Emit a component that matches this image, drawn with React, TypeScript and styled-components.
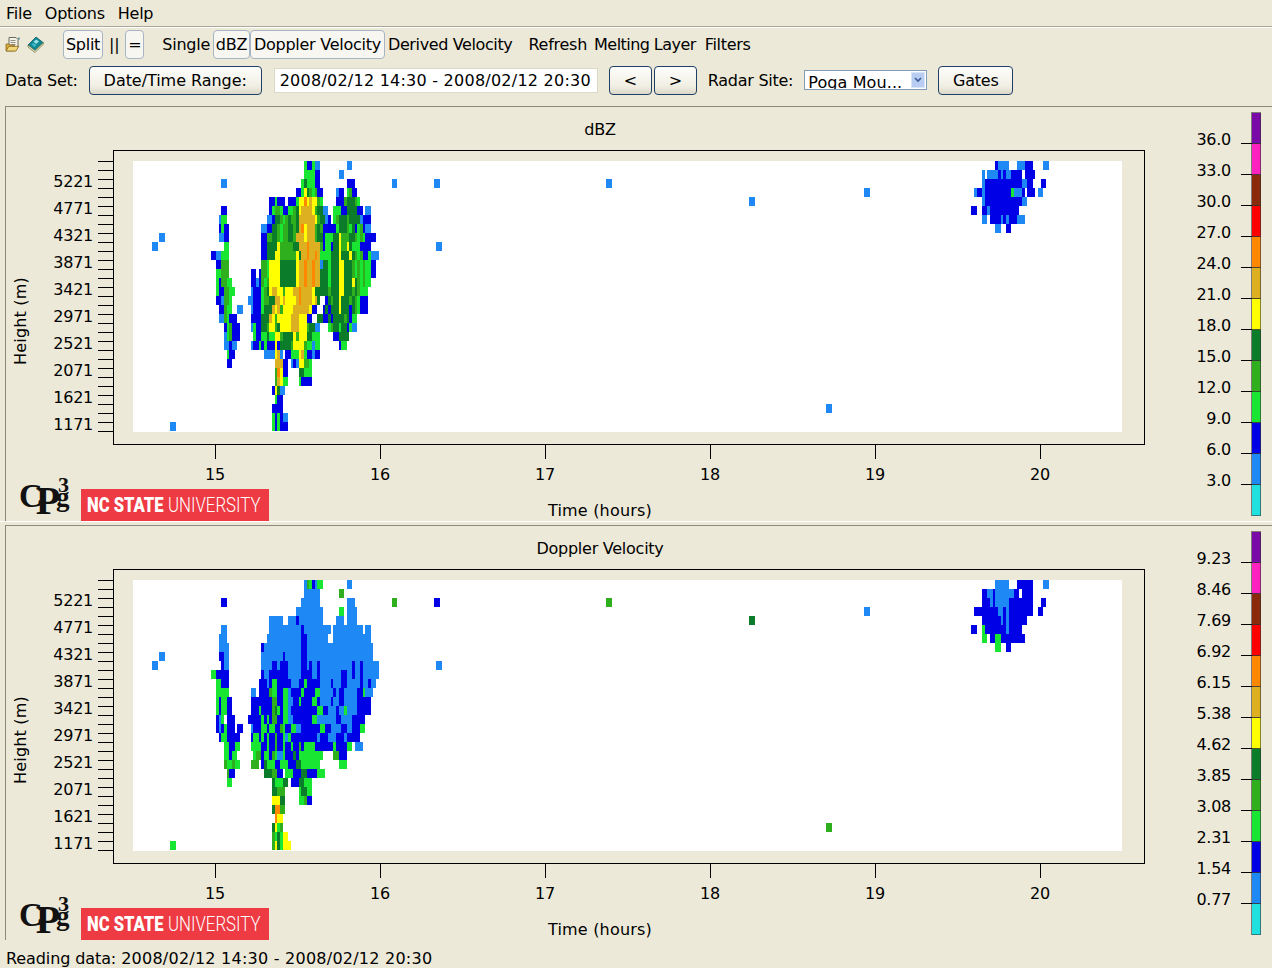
import React from "react";
import styled, { createGlobalStyle } from "styled-components";

const FONT = `"DejaVu Sans", "Liberation Sans", sans-serif`;

const Global = createGlobalStyle`
  html, body { margin: 0; padding: 0; background: #ece9d8; }
  body { font-family: ${FONT}; color: #000; }
`;

const Root = styled.div`
  width: 1272px; height: 968px; overflow: hidden; display: flex; flex-direction: column;
  background: #ece9d8; font-size: 16px; letter-spacing: -0.25px;
`;
const MenuBar = styled.div`
  height: 27px; box-sizing: border-box; display: flex; align-items: center; gap: 13px;
  padding: 1px 6px 0; border-bottom: 1px solid #aca899; box-shadow: 0 1px 0 #fff;
`;
const Toolbar = styled.div`
  height: 33px; margin-top: 1px; display: flex; align-items: center; padding-left: 5px;
`;
const IconSlot = styled.svg<{ $ml?: number }>`
  width: 17px; height: 17px; margin-left: ${p => p.$ml ?? 0}px; flex: none;
`;
const ToolButton = styled.div<{ $w: number; $ml?: number }>`
  box-sizing: border-box; width: ${p => p.$w}px; height: 29px; margin-left: ${p => p.$ml ?? 0}px;
  display: flex; align-items: center; justify-content: center; flex: none;
  background: #f7f6f0; border: 1px solid #a8b3c4; border-radius: 4px;
`;
const ToolLabel = styled.span<{ $ml?: number; $ls?: number }>`
  margin-left: ${p => p.$ml ?? 0}px; white-space: nowrap; flex: none;
  letter-spacing: ${p => p.$ls ?? -0.25}px;
`;
const DataRow = styled.div`
  height: 32px; margin-top: 4px; display: flex; align-items: center; padding-left: 5px;
`;
const PushButton = styled.div<{ $w: number; $ml?: number; $ls?: number }>`
  box-sizing: border-box; width: ${p => p.$w}px; height: 29px; margin-left: ${p => p.$ml ?? 0}px;
  display: flex; align-items: center; justify-content: center; flex: none;
  letter-spacing: ${p => p.$ls ?? -0.25}px;
  background: linear-gradient(#fdfdfb, #f1efe4 70%, #dcd8c8);
  border: 1px solid #1f3f66; border-radius: 4px;
`;
const RangeField = styled.div`
  box-sizing: border-box; width: 324px; height: 25px; margin-left: 12px; padding-left: 5px;
  display: flex; align-items: center; flex: none; background: #fff;
  border: 1px solid #dcd9c9; white-space: nowrap; letter-spacing: 0.24px;
`;
const Combo = styled.div`
  box-sizing: border-box; width: 123px; height: 20px; margin-left: 11px; flex: none;
  display: flex; align-items: center; background: #fff; border: 1px solid #7f9db9; overflow: hidden;
`;
const ComboText = styled.span`
  flex: 1; padding-left: 3px; white-space: nowrap; line-height: 22px; height: 18px; margin-top: 1px;
  overflow: hidden; letter-spacing: 0.1px;
`;
const ComboArrow = styled.div`
  width: 14px; height: 16px; margin-right: 1px; background: #b9cdf3; border: 1px solid #dbe5f8; box-sizing: border-box;
  display: flex; align-items: center; justify-content: center; flex: none;
`;
const Charts = styled.div`
  margin-top: 10px; display: flex; flex-direction: column;
`;
const Panel = styled.section`
  position: relative; box-sizing: border-box; width: 1267px; height: 415px; margin-left: 5px;
  border-top: 1px solid #8c8a7c; border-left: 1px solid #8c8a7c;
`;
const Splitter = styled.div`
  height: 4px; box-sizing: border-box; border-top: 1px solid #fff;
`;
const ChartSvg = styled.svg`
  position: absolute; left: -1px; top: -1px; width: 1267px; height: 415px; display: block;
`;
const Title = styled.text`
  font-family: ${FONT}; font-size: 16px; letter-spacing: -0.25px; text-anchor: middle; dominant-baseline: central; fill: #000;
`;
const WideTitle = styled(Title)`
  letter-spacing: 0.2px;
`;
const EndLabel = styled(Title)`
  text-anchor: end;
`;
const Logo = styled.div`
  position: absolute; left: 13px; top: 369px; width: 60px; height: 42px;
  font-family: "Liberation Serif", serif; font-weight: 700; color: #111;
`;
const LogoLetters = styled.span`
  position: absolute; left: 0; top: 0; font-size: 40px; line-height: 40px; letter-spacing: -6px; white-space: nowrap;
`;
const LogoC = styled.span`
  font-size: 33px; vertical-align: 7px; letter-spacing: -7px;
`;
const LogoG = styled.span`
  position: absolute; left: 37px; top: 16px; font-size: 27px; line-height: 10px;
`;
const LogoThree = styled.span`
  position: absolute; left: 39px; top: 2px; font-size: 22px; line-height: 14px;
`;
const Brand = styled.div`
  position: absolute; left: 75px; top: 382px; width: 188px; height: 32px; background: #ee3a43;
  color: #fff; overflow: hidden; font-family: "Roboto", "Liberation Sans", sans-serif; font-size: 21px; line-height: 32px; letter-spacing: 0;
`;
const BrandPart = styled.span<{ $left: number; $bold?: boolean; $sx: number }>`
  position: absolute; left: ${p => p.$left}px; top: 0; white-space: nowrap;
  font-weight: ${p => (p.$bold ? 900 : 300)}; transform: scaleX(${p => p.$sx}); transform-origin: left center;
`;
const StatusBar = styled.div`
  height: 20px; margin-top: 8px; padding-left: 6px; display: flex; align-items: center; white-space: pre;
  letter-spacing: -0.1px;
`;
const StatusDate = styled.span`
  letter-spacing: 0.24px;
`;

const C: Record<string, string> = {
  c: "#20e0e0", b: "#1e88f5", B: "#0000e6", g: "#19e632", G: "#2fae1e", D: "#0b7d2a",
  y: "#ffff00", O: "#dcb020", o: "#ff8800", r: "#ff0000", n: "#8b2a0a", m: "#ff20c0", p: "#7a0aa8",
};
const W = 8 / 3;
type Rect = { x: number; y: number; w: number; c: string };

function parseRows(rows: string[], baseX: number, topY: number): Rect[] {
  const out: Rect[] = [];
  rows.forEach((row, r) => {
    row.split(" ").filter(Boolean).forEach(seg => {
      const [start, body] = seg.split(":");
      let col = Number(start);
      for (const m of body.matchAll(/([a-zA-Z.])(\d*)/g)) {
        const n = m[2] ? Number(m[2]) : 1;
        if (m[1] !== ".") out.push({ x: baseX + col * W, y: topY + r * 9, w: n * W, c: C[m[1]] });
        col += n;
      }
    });
  });
  return out;
}

const DBZ_MAIN = [
  "39:gBBgbb 55:bb",
  "39:ggggBB 52:bb",
  "8:bb 38:gDgggBB 55:BBB 72:bb",
  "36:BBgyDGgGBB 51:bBB 55:gGBB",
  "26:BBgBBB 33:BBBgyyoyOyyGg 51:BBBGDDDGg",
  "8:BB 26:BgGGgBBggGDyOOOOyGDDbb 50:gggBBDDDDBB 62:bb",
  "7:bgg 25:bbBDDGgGDGGDOOOOOOyGDDbB 50:gGDDDGDDDDbBBB",
  "7:BgBB 23:bbBBDDGgGGDDGDOoyOOOGDGBBBBB 51:gDDDGgDBgGBbb",
  "7:bbBB 23:BBGGDDGgGGDDGOOOyOOOGDD 46:BgggDDyGGGDDGgGgBBBB",
  "9:gg 23:BBDDDDyGGGGGDDOOOoOOOOG 46:BggBDDyGGyDgggBBBB",
  "4:BBbbggg 23:BBDDDyyGGGGGGyDOOoOOoO 45:ggggDDDyDDDyDGgGBBgbbb",
  "6:BBGGG 23:GGgyyyyDDDDDDyOOoOOoOOb 46:DDgDDDyyDDDGgGgGggBB",
  "6:ggGGG 19:BB.BGGgyyyyDDDDDDyOOoOOoOOD 46:DDgDDDyyDDDGgGgGggBB",
  "6:gBGGgg 19:BBbBGgGyyyyDDDDDDyOOoOOoOOD 46:DDgDDDyyDDDyDGgGgg",
  "6:gBBGGgg 19:bBBBgGDyOOyyGyyyOOoOOOOyDDD 46:DDGDDDyyDDDGDGggg",
  "6:BBbGGg 18:bbBBBgGGDDOOyOyyyyOoOOOOyOD 47:BDGDDyDDDGDGgBBB",
  "7:BBGgg 14:bb 19:bBBBgDDDOyOGyyyyOOOOOOyBB 46:BDBDDDyDDDBDGgBBB",
  "7:bbGgBBB 19:BBBBDDDOyGyyyyyOOOyyyBB 44:DDBBDBDDDDGDBgg",
  "9:BgGBBB 19:bgBBDDGyyGDyyyyOOOyyyGDDbb 48:gGDDgDDBgbb",
  "9:bgGBBB 20:gBBggDggyyGDDDDyGyyyDDggg 50:BBDDDD",
  "9:bbBbb 19:bBBgBgBBByBDDDDGyyyyGggbgg 52:Bgg",
  "10:gBB 24:bbbbyOb.BBgggyOgBBbBB",
  "10:BB 28:OOOBB.bBbyyGGg",
  "28:GoyBB 37:DDggg",
  "28:GOygg 37:gBBBB",
  "27:ByDbb",
  "28:gBB",
  "27:BBBB",
  "27:gBgBbb",
  "27:gBgBBB",
];
const VEL_MAIN = [
  "39:bGgBbgg 55:bb",
  "39:b6 52:GG",
  "8:BB 38:b7 55:b3 72:GG",
  "36:b10 52:gg 55:b4",
  "26:b5 33:b3Bb9 51:b3 55:b4",
  "8:bb 26:b12Bb10 50:b11 62:bb",
  "7:b3 25:b13B2b8 50:b14",
  "7:b4 23:Bb14B2b25",
  "7:B2b2 23:b8Bb6B2b25",
  "8:Bb2 23:b4B2bB3b5B2bBb2Bb12Bb2Bb6",
  "4:g2B5 23:Bb2B7b5B4b2Bb8B2b2Bb2Bb6",
  "6:g2B3 22:B3bBg2B5b3B2gB5b4Bb3B2b5Bb2Bb2",
  "6:g5 19:b2.B4Gg2B2g2bB4gB4g2b5BbB2b5B2gb3",
  "6:gBg2B2 19:B8G2B2g2b2B2gB4g2Bb4Bb2B2b5B5",
  "6:gBg2B2 19:B3gB4GDgBg2bB10g2B2b3Bb2gb4B5",
  "6:Bbg.B3 18:B5gBgBG2B2g2b2B7g2b7B2b4B5",
  "6:BbBgB3.B2 19:bB3g2Bg2B2GgB2g2b2B7g2B2b4B2b2B3g2",
  "7:Bg2B5 19:Bg2BgBgB2GB2gbgB10bB3b3B3bB5",
  "9:g2B2g2 19:g4B2gB2GB2gB2gB2GBg4B7gB4g2.b3",
  "9:g2Bg2 20:gG2Bg2BGgb2gB3DBg9 50:G2B3",
  "9:Gg2Gg2 19:G3.BDg3B2g3B3D2g7 52:g3",
  "10:GB2 24:D3G2B2.g3B3D2B4g3",
  "10:g2 27:Dg3D2.B3D2g3",
  "27:D2G3 37:gD2g2",
  "27:y3D2 37:g2GB2",
  "27:Do2G2",
  "28:oy2",
  "27:DygG",
  "27:GgDgy2",
  "27:GyDgy3",
];
const DBZ_CLUSTER = [
  "17:Bb4 25:b3B3 35:b2",
  "12:b.b4BbBb2B4.B4",
  "12:bB14b2B2 34:B2",
  "9:bB2bB10gb3B.B3.b2",
  "12:bB14b2",
  "8:B2 12:B2bB11",
  "12:b2.B4bBbB3b3",
  "17:b2 21:B2",
];
const VEL_CLUSTER = [
  "17:b5 25:B6 35:b2",
  "12:B2b2Bb7B2.B4",
  "12:B3bBb5B9 34:B2",
  "9:B9b2BbB9 33:B2",
  "12:B7bBbB7",
  "8:B2 12:gB8bB5",
  "12:g2.B2g2B9",
  "17:g2 21:B2",
];
type Spot = [number, number, string];
const DBZ_SPOTS: Spot[] = [[155, 9, "b"], [162, 8, "b"], [173, 29, "b"], [437, 2, "b"], [439, 9, "b"], [609, 2, "b"], [752, 4, "b"], [867, 3, "b"], [829, 27, "b"]];
const VEL_SPOTS: Spot[] = [[155, 9, "b"], [162, 8, "b"], [173, 29, "g"], [437, 2, "B"], [439, 9, "b"], [609, 2, "G"], [752, 4, "D"], [867, 3, "b"], [829, 27, "G"]];

const HEIGHTS = ["5221", "4771", "4321", "3871", "3421", "2971", "2521", "2071", "1621", "1171"];
const HOURS = [15, 16, 17, 18, 19, 20];
const LEGEND = ["p", "m", "n", "r", "o", "O", "y", "D", "G", "g", "B", "b", "c"];

interface ChartProps {
  title: string; main: string[]; cluster: string[]; spots: Spot[]; legend: string[];
}

function Chart({ title, main, cluster, spots, legend }: ChartProps) {
  const top = 161;
  const rects = [...parseRows(main, 200, top), ...parseRows(cluster, 950, top)];
  const ticks = Array.from({ length: 31 }, (_, i) => 161 + i * 9);
  return (
    <ChartSvg viewBox={`5 106 1267 415`}>
      <Title x={600} y={129}>{title}</Title>
      <rect x={113.5} y={150.5} width={1031} height={294} fill="none" stroke="#000" />
      <rect x={133} y={161} width={989} height={271} fill="#fff" />
      <g shapeRendering="crispEdges">
        {rects.map((r, i) => <rect key={i} x={r.x} y={r.y} width={r.w} height={9} fill={r.c} />)}
        {spots.map(([x, row, c], i) => <rect key={i} x={x - 3} y={top + row * 9} width={6} height={9} fill={C[c]} />)}
        {ticks.map(y => <line key={y} x1={98} x2={113} y1={y + 0.5} y2={y + 0.5} stroke="#000" />)}
        {HOURS.map((h, i) => <line key={h} x1={215.5 + i * 165} x2={215.5 + i * 165} y1={444} y2={459} stroke="#000" />)}
      </g>
      {HEIGHTS.map((h, i) => <EndLabel key={h} x={93} y={181 + i * 27}>{h}</EndLabel>)}
      {HOURS.map((h, i) => <Title key={h} x={215 + i * 165} y={474}>{h}</Title>)}
      <WideTitle x={600} y={510}>Time (hours)</WideTitle>
      <WideTitle transform="translate(20 321) rotate(-90)" x={0} y={0}>Height (m)</WideTitle>
      <g shapeRendering="crispEdges">
        {LEGEND.map((c, i) => <rect key={c} x={1251.5} y={112.5 + i * 31} width={9} height={31} fill={C[c]} stroke="#333" strokeWidth={0.6} />)}
        {legend.map((_, i) => <line key={i} x1={1241} x2={1252} y1={143.5 + i * 31} y2={143.5 + i * 31} stroke="#000" />)}
      </g>
      {legend.map((v, i) => <EndLabel key={v} x={1231} y={139 + i * 31}>{v}</EndLabel>)}
    </ChartSvg>
  );
}

function ChartPanel(props: ChartProps) {
  return (
    <Panel>
      <Chart {...props} />
      <Logo>
        <LogoLetters><LogoC>C</LogoC>P</LogoLetters>
        <LogoThree>3</LogoThree>
        <LogoG>g</LogoG>
      </Logo>
      <Brand>
        <BrandPart $left={6} $bold $sx={0.79}>NC STATE</BrandPart>
        <BrandPart $left={87} $sx={0.8}>UNIVERSITY</BrandPart>
      </Brand>
    </Panel>
  );
}

const FolderIcon = () => (
  <IconSlot viewBox="0 0 17 17">
    <path d="M4 1.5h7l2 2v8H4z" fill="#f4f1e6" stroke="#6b6b5c" strokeWidth="1" />
    <path d="M5.5 4.5h5M5.5 6.5h5M5.5 8.5h5" stroke="#77776a" strokeWidth="0.8" />
    <path d="M12.5 2.5l2-1.5v3z" fill="#3a7f8f" />
    <path d="M1 8h3l1 1.2h4.5V15H1z" fill="#d9a93c" stroke="#8a6a1e" strokeWidth="0.8" />
    <path d="M1.2 15l2.5-4.6h10L11 15z" fill="#f3d67a" stroke="#8a6a1e" strokeWidth="0.8" />
  </IconSlot>
);
const BookIcon = () => (
  <IconSlot viewBox="0 0 17 17" $ml={5}>
    <path d="M1 9l8-8 7 5.5-8 8z" fill="#0f8a95" stroke="#0b5a63" strokeWidth="0.8" />
    <path d="M1 9v2l7 5.5 8.4-8.4v-1.6L8 14.5z" fill="#f0eccb" stroke="#5a6a3c" strokeWidth="0.7" />
    <path d="M6.5 5.5l3-2 2.5 2-3 2.4z" fill="#9be0e6" />
    <path d="M4.5 8.5l2-1.5 3 2.3-2 1.6z" fill="#3fb8c4" />
  </IconSlot>
);

export default function App() {
  return (
    <Root>
      <Global />
      <MenuBar>
        <span>File</span><span>Options</span><span>Help</span>
      </MenuBar>
      <Toolbar>
        <FolderIcon />
        <BookIcon />
        <ToolButton $w={40} $ml={19}>Split</ToolButton>
        <ToolLabel $ml={6}>||</ToolLabel>
        <ToolButton $w={19} $ml={6}>=</ToolButton>
        <ToolLabel $ml={18}>Single</ToolLabel>
        <ToolButton $w={37} $ml={3}>dBZ</ToolButton>
        <ToolButton $w={135}>Doppler Velocity</ToolButton>
        <ToolLabel $ml={3} $ls={-0.38}>Derived Velocity</ToolLabel>
        <ToolLabel $ml={16}>Refresh</ToolLabel>
        <ToolLabel $ml={7} $ls={-0.55}>Melting Layer</ToolLabel>
        <ToolLabel $ml={9} $ls={-0.3}>Filters</ToolLabel>
      </Toolbar>
      <DataRow>
        <ToolLabel>Data Set:</ToolLabel>
        <PushButton $w={173} $ml={11} $ls={-0.05}>Date/Time Range:</PushButton>
        <RangeField>2008/02/12 14:30 - 2008/02/12 20:30</RangeField>
        <PushButton $w={43} $ml={11}>&lt;</PushButton>
        <PushButton $w={43} $ml={2}>&gt;</PushButton>
        <ToolLabel $ml={11}>Radar Site:</ToolLabel>
        <Combo>
          <ComboText>Poga Mou...</ComboText>
          <ComboArrow>
            <svg width="8" height="6" viewBox="0 0 8 6"><path d="M1 1l3 3 3-3" fill="none" stroke="#3d5a96" strokeWidth="1.6" /></svg>
          </ComboArrow>
        </Combo>
        <PushButton $w={75} $ml={11}>Gates</PushButton>
      </DataRow>
      <Charts>
        <ChartPanel title="dBZ" main={DBZ_MAIN} cluster={DBZ_CLUSTER} spots={DBZ_SPOTS}
          legend={["36.0", "33.0", "30.0", "27.0", "24.0", "21.0", "18.0", "15.0", "12.0", "9.0", "6.0", "3.0"]} />
        <Splitter />
        <ChartPanel title="Doppler Velocity" main={VEL_MAIN} cluster={VEL_CLUSTER} spots={VEL_SPOTS}
          legend={["9.23", "8.46", "7.69", "6.92", "6.15", "5.38", "4.62", "3.85", "3.08", "2.31", "1.54", "0.77"]} />
      </Charts>
      <StatusBar>Reading data: <StatusDate>2008/02/12 14:30 - 2008/02/12 20:30</StatusDate></StatusBar>
    </Root>
  );
}
